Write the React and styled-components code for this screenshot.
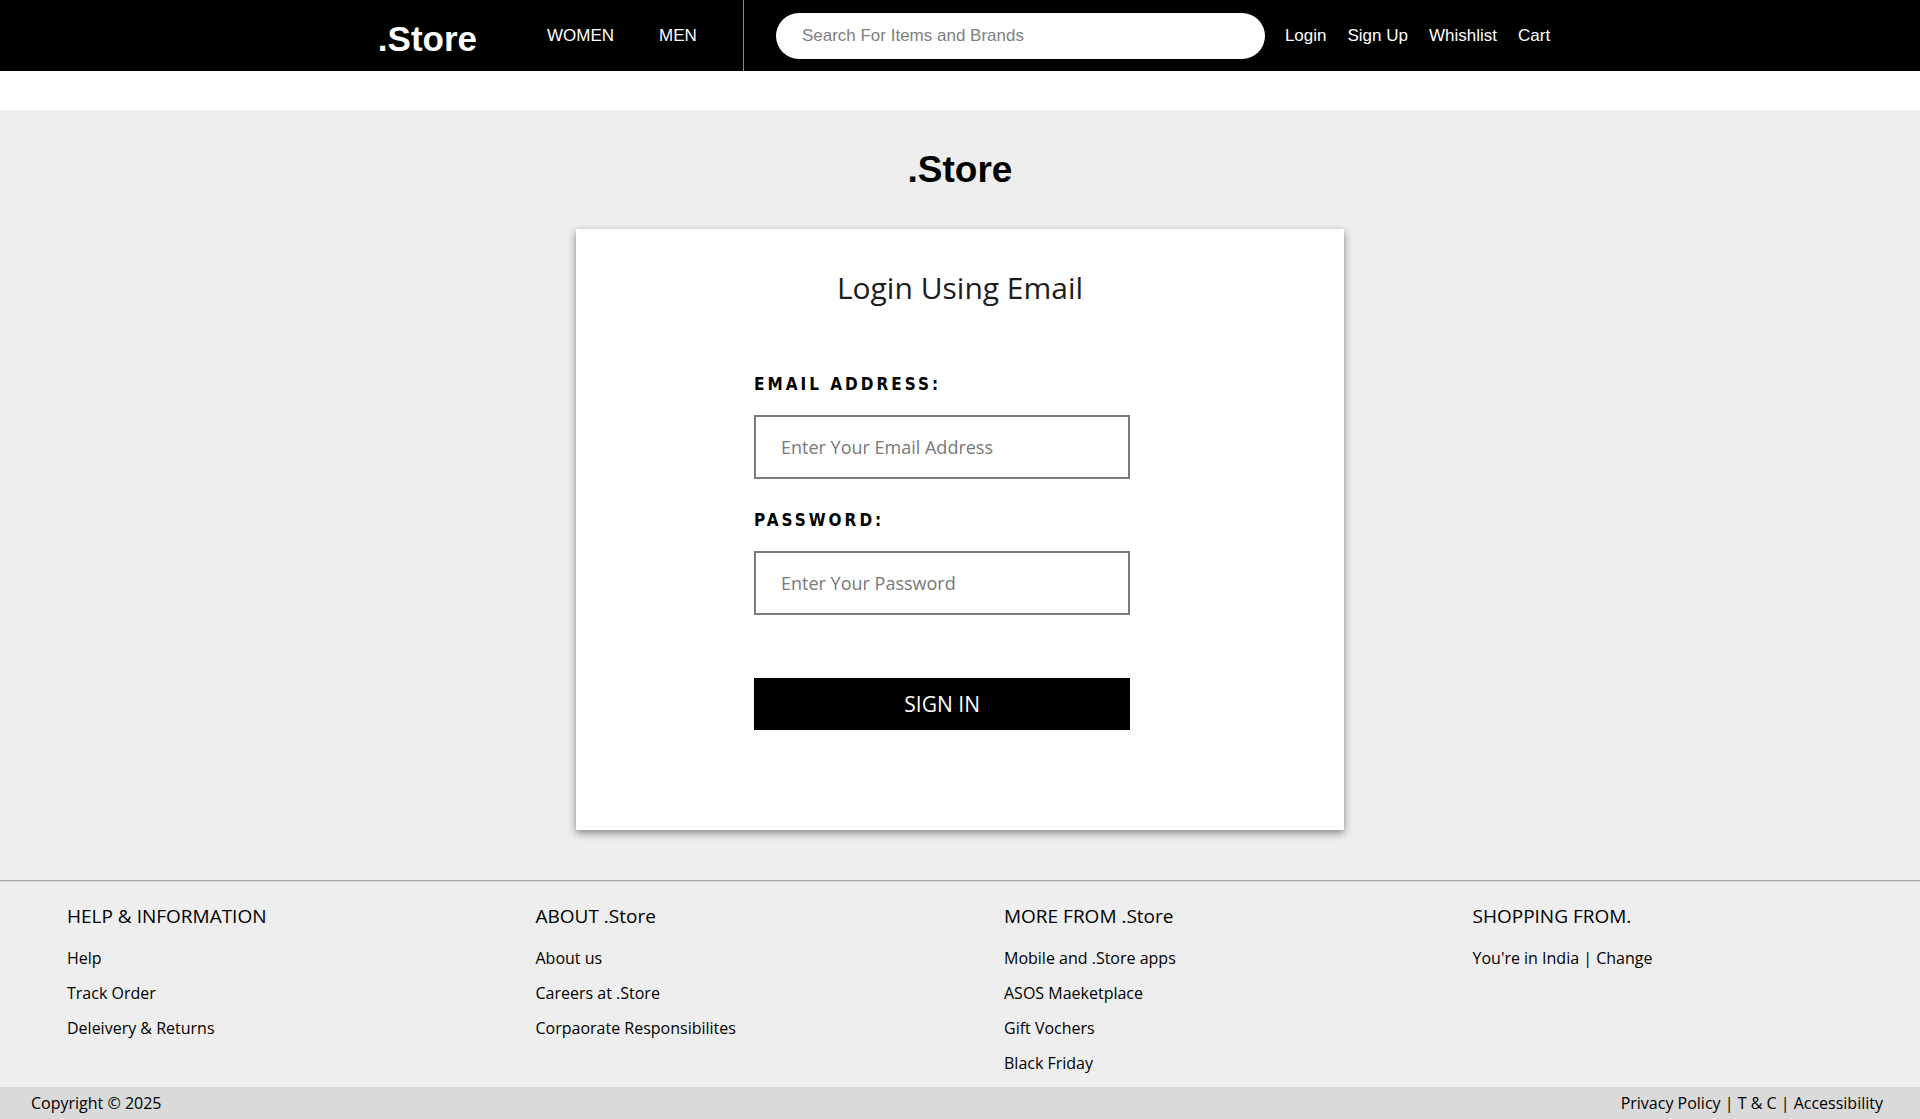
import React from "react";
import styled, { createGlobalStyle } from "styled-components";

const sans = `"Liberation Sans", Arial, sans-serif`;
const humanist = `Tahoma, "Open Sans", sans-serif`;
const wide = `Tahoma, "DejaVu Sans Condensed", "DejaVu Sans", sans-serif`;

const GlobalStyle = createGlobalStyle`
  *, *::before, *::after { box-sizing: border-box; }
  body { margin: 0; background: #fff; color: #000; font-family: ${humanist}; font-size: 16px; }
  a { color: inherit; text-decoration: none; }
  h1, h2, h3, p, ul { margin: 0; padding: 0; }
  ul { list-style: none; }
`;

const Header = styled.header`
  display: flex;
  justify-content: center;
  align-items: center;
  height: 71px;
  margin-bottom: 39px;
  padding-left: 8px;
  background: #000;
  color: #fff;
  font-family: ${sans};
  font-size: 17px;
`;

const HeaderLogo = styled.a`
  padding: 6px 0 0;
  font-size: 35px;
  line-height: 40px;
  font-weight: 700;
`;

const Departments = styled.nav`
  display: flex;
  align-items: center;
  align-self: stretch;
  gap: 45px;
  margin-right: 32px;
  padding: 0 46px 0 70px;
  border-right: 1px solid #8c8c8c;
`;

const SearchBox = styled.input`
  width: 489px;
  min-width: 0;
  height: 46px;
  margin-right: 20px;
  padding: 0 26px;
  border: 0;
  border-radius: 23px;
  background: #fff;
  font-family: ${sans};
  font-size: 17px;
  &::placeholder { color: #808080; }
`;

const Account = styled.nav`
  display: flex;
  gap: 21px;
  white-space: nowrap;
`;

const Main = styled.main`
  display: flex;
  flex-direction: column;
  align-items: center;
  padding: 38px 0 50px;
  background: #eee;
`;

const PageLogo = styled.h1`
  margin-bottom: 37px;
  font-family: ${sans};
  font-size: 37px;
  line-height: 44px;
`;

const Card = styled.section`
  width: 40%;
  min-width: 560px;
  padding: 38px 0 100px;
  background: #fff;
  box-shadow: 0 3px 8px rgba(0, 0, 0, 0.45);
`;

const CardTitle = styled.h2`
  margin-bottom: 63px;
  color: #1c1c1c;
  font-size: 30px;
  line-height: 42px;
  font-weight: 400;
  text-align: center;
`;

const Form = styled.form`
  display: flex;
  flex-direction: column;
  width: 49%;
  margin-left: 178px;
`;

const Label = styled.label`
  margin-bottom: 19px;
  font-family: ${wide};
  font-size: 17px;
  line-height: 24px;
  font-weight: 700;
  letter-spacing: 3px;
`;

const Field = styled.input`
  width: 100%;
  height: 64px;
  margin-bottom: 29px;
  padding: 0 25px;
  border: 2px solid #7b7b7b;
  border-radius: 0;
  background: #fff;
  font-family: ${humanist};
  font-size: 18px;
  &::placeholder { color: #787878; }
`;

const SubmitButton = styled.button`
  height: 52px;
  margin-top: 34px;
  padding: 0;
  border: 0;
  background: #000;
  color: #fff;
  font-family: ${humanist};
  font-size: 21px;
`;

const Footer = styled.footer`
  background: #eee;
`;

const Rule = styled.hr`
  height: 2px;
  margin: 0;
  border: 0;
  border-top: 1px solid #a9a9a9;
  background: #dadada;
`;

const Columns = styled.div`
  display: grid;
  grid-template-columns: repeat(4, 1fr);
  gap: 88px;
  padding: 20px 67px 12px;
`;

const ColumnTitle = styled.h3`
  margin-bottom: 16px;
  font-size: 19px;
  line-height: 28px;
  font-weight: 400;
`;

const LinkList = styled.ul`
  display: grid;
  gap: 11px;
  line-height: 24px;
`;

const Legal = styled.div`
  display: flex;
  justify-content: space-between;
  padding: 4px 37px 4px 31px;
  background: #dadada;
  line-height: 24px;
`;

const footerColumns = [
  { title: "HELP & INFORMATION", links: ["Help", "Track Order", "Deleivery & Returns"] },
  { title: "ABOUT .Store", links: ["About us", "Careers at .Store", "Corpaorate Responsibilites"] },
  { title: "MORE FROM .Store", links: ["Mobile and .Store apps", "ASOS Maeketplace", "Gift Vochers", "Black Friday"] },
  { title: "SHOPPING FROM.", links: ["You're in India | Change"] },
];

export default function App() {
  return (
    <>
      <GlobalStyle />
      <Header>
        <HeaderLogo href="#">.Store</HeaderLogo>
        <Departments>
          <a href="#women">WOMEN</a>
          <a href="#men">MEN</a>
        </Departments>
        <SearchBox type="search" aria-label="Search" placeholder="Search For Items and Brands" />
        <Account>
          {["Login", "Sign Up", "Whishlist", "Cart"].map((item) => (
            <a key={item} href="#">{item}</a>
          ))}
        </Account>
      </Header>
      <Main>
        <PageLogo>.Store</PageLogo>
        <Card>
          <CardTitle>Login Using Email</CardTitle>
          <Form>
            <Label htmlFor="email">EMAIL ADDRESS:</Label>
            <Field id="email" type="email" placeholder="Enter Your Email Address" />
            <Label htmlFor="password">PASSWORD:</Label>
            <Field id="password" type="password" placeholder="Enter Your Password" />
            <SubmitButton type="button">SIGN IN</SubmitButton>
          </Form>
        </Card>
      </Main>
      <Footer>
        <Rule />
        <Columns>
          {footerColumns.map(({ title, links }) => (
            <div key={title}>
              <ColumnTitle>{title}</ColumnTitle>
              <LinkList>
                {links.map((link) => (
                  <li key={link}><a href="#">{link}</a></li>
                ))}
              </LinkList>
            </div>
          ))}
        </Columns>
        <Legal>
          <p>Copyright © 2025</p>
          <p>Privacy Policy | T &amp; C | Accessibility</p>
        </Legal>
      </Footer>
    </>
  );
}
